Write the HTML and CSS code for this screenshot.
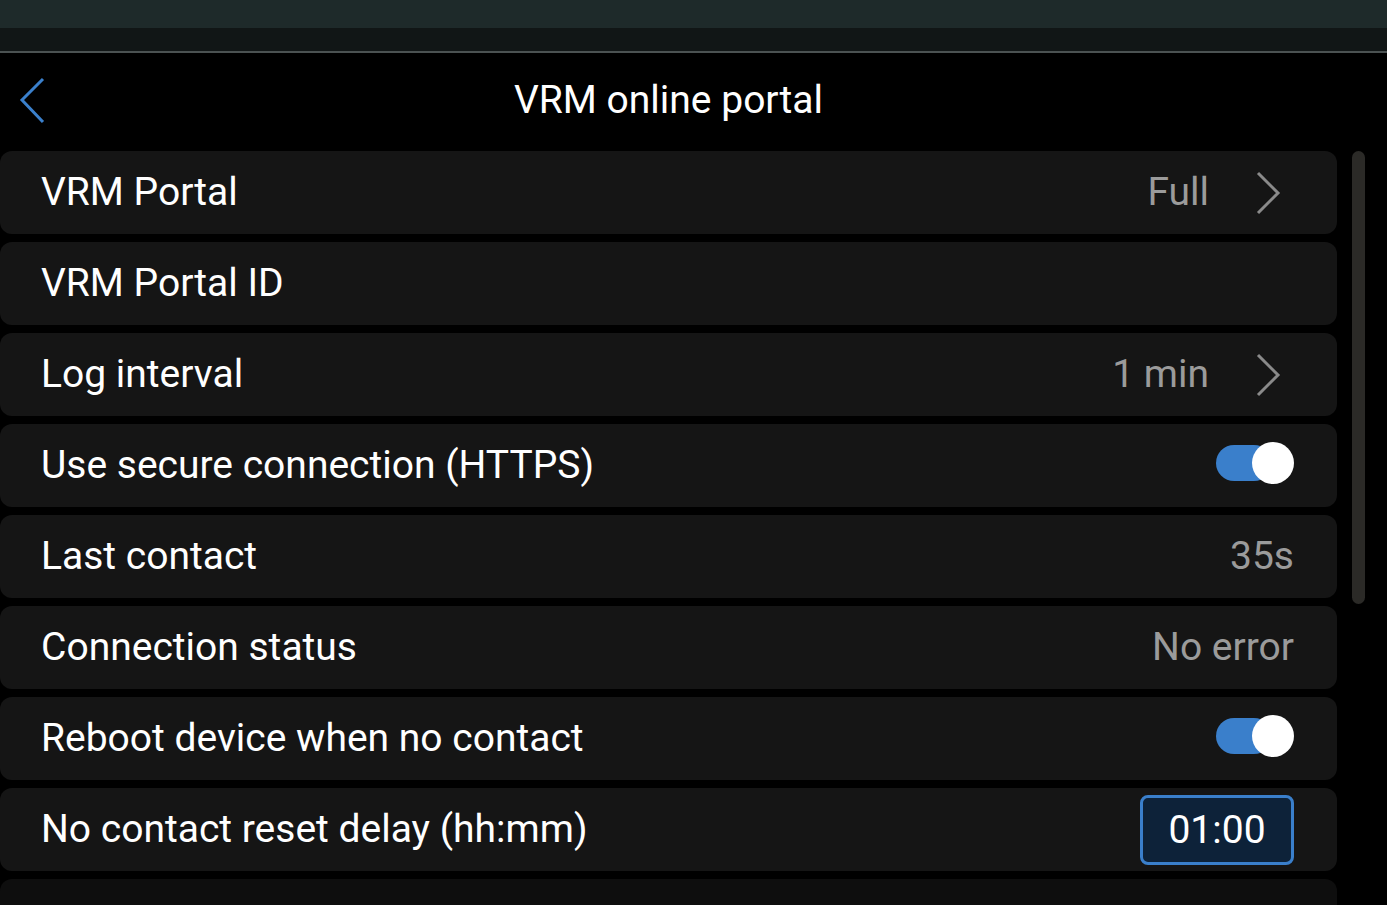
FILE: index.html
```html
<!DOCTYPE html>
<html>
<head>
<meta charset="utf-8">
<link rel="stylesheet" href="styles.css">
</head>
<body>
<div class="status-bar"></div>
<div class="sub-bar"></div>
<header class="header">
  <svg class="back" width="30" height="50" viewBox="0 0 30 50"><polyline points="25,3 4,24 25,46" fill="none" stroke="#3b80cc" stroke-width="3"/></svg>
  <h1 class="title">VRM online portal</h1>
</header>
<main class="main">
  <div class="list">
    <div class="row"><span class="label">VRM Portal</span><span class="value">Full</span><svg class="chev" width="26" height="44" viewBox="0 0 26 44"><polyline points="3,2 23,22 3,42" fill="none" stroke="#8a8a8a" stroke-width="3"/></svg></div>
    <div class="row"><span class="label">VRM Portal ID</span></div>
    <div class="row"><span class="label">Log interval</span><span class="value">1 min</span><svg class="chev" width="26" height="44" viewBox="0 0 26 44"><polyline points="3,2 23,22 3,42" fill="none" stroke="#8a8a8a" stroke-width="3"/></svg></div>
    <div class="row"><span class="label">Use secure connection (HTTPS)</span><span class="toggle"><span class="knob"></span></span></div>
    <div class="row"><span class="label">Last contact</span><span class="value end">35s</span></div>
    <div class="row"><span class="label">Connection status</span><span class="value end">No error</span></div>
    <div class="row"><span class="label">Reboot device when no contact</span><span class="toggle"><span class="knob"></span></span></div>
    <div class="row"><span class="label">No contact reset delay (hh:mm)</span><span class="input">01:00</span></div>
    <div class="row dim"></div>
  </div>
  <div class="scroll"></div>
</main>
</body>
</html>
```

FILE: styles.css
```css
html, body {
  margin: 0;
  padding: 0;
  background: #000;
  height: 905px;
  overflow: hidden;
  font-family: Roboto, "Noto Sans", sans-serif;
}
.status-bar {
  height: 28px;
  background: #1e2a2a;
}
.sub-bar {
  height: 23px;
  background: #111616;
  border-bottom: 2px solid #4b5252;
}
.header {
  width: 1337px;
  height: 98px;
  display: flex;
  align-items: center;
  justify-content: center;
  position: relative;
}
.back {
  position: absolute;
  left: 18px;
  top: 23px;
}
.title {
  margin: 0;
  font-weight: 400;
  font-size: 39px;
  color: #fff;
  margin-top: -4px;
}
.main {
  display: flex;
  align-items: flex-start;
  height: 754px;
  overflow: hidden;
}
.list {
  width: 1337px;
  display: flex;
  flex-direction: column;
  gap: 8px;
}
.row {
  height: 83px;
  flex: none;
  background: #151515;
  border-radius: 12px;
  display: flex;
  align-items: center;
  padding: 0 43px 0 41px;
  color: #fff;
  font-size: 39px;
}
.row.dim {
  background: #0e0e0e;
}
.label {
  flex: 1;
  padding-bottom: 2px;
}
.value {
  color: #9b9b9b;
  margin-right: 46px;
  padding-bottom: 2px;
}
.value.end {
  margin-right: 0;
}
.chev {
  margin-right: 13px;
}
.toggle {
  width: 56px;
  height: 36px;
  background: #3a7fcb;
  border-radius: 18px;
  position: relative;
  margin-right: 22px;
  margin-bottom: 6px;
}
.knob {
  position: absolute;
  width: 42px;
  height: 42px;
  border-radius: 50%;
  background: #fff;
  left: 36px;
  top: -3px;
}
.input {
  width: 148px;
  height: 64px;
  border: 3px solid #3a7fcb;
  border-radius: 8px;
  background: #0d2239;
  color: #fff;
  display: flex;
  align-items: center;
  justify-content: center;
  font-size: 39px;
}
.scroll {
  width: 13px;
  height: 453px;
  margin-left: 15px;
  background: #2b2a27;
  border-radius: 7px;
}
```
